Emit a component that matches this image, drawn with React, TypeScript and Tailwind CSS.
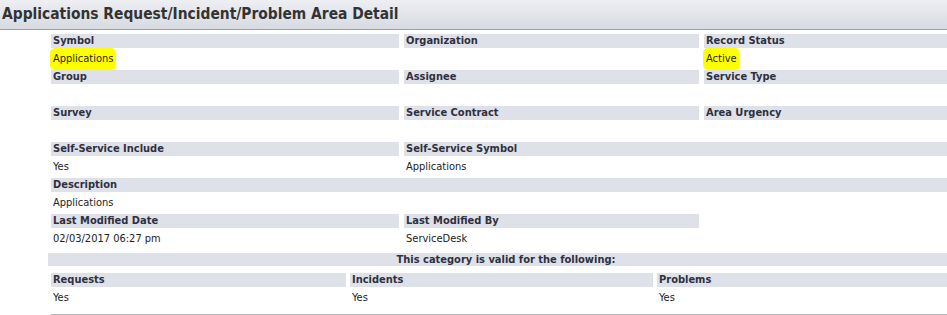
const font = "font-['DejaVu_Sans_Condensed','DejaVu_Sans',sans-serif]";

function Label({ children, className = "" }: { children?: React.ReactNode; className?: string }) {
  return (
    <div className={`h-[14px] bg-[#dfe1e8] pl-[2px] text-[11px] leading-[14px] font-bold text-[#2e3040] whitespace-nowrap ${className}`}>
      {children}
    </div>
  );
}

function Value({ children, className = "" }: { children?: React.ReactNode; className?: string }) {
  return (
    <div className={`h-[18px] pl-[2px] flex items-center text-[11px] text-[#222] whitespace-nowrap ${className}`}>
      {children}
    </div>
  );
}

function Marked({ children }: { children: React.ReactNode }) {
  return (
    <span className="bg-[#ffff00] -ml-[3px] px-[3px] py-[3px] rounded-[5px]">{children}</span>
  );
}

const grid3 = "grid grid-cols-[348px_295px_259px] gap-x-[5px]";

export default function App() {
  return (
    <div className={`w-[947px] h-[315px] overflow-hidden bg-white ${font}`}>
      <header className="h-[30px] border-b border-[#9a9ca6] bg-gradient-to-b from-[#eeeff3] to-[#d7dae1] flex items-center pl-[2px]">
        <h1 className="text-[15.4px] font-bold text-[#333] whitespace-nowrap">
          Applications Request/Incident/Problem Area Detail
        </h1>
      </header>

      <div className="ml-[51px] w-[913px] mt-[4px]">
        <div className={`${grid3} gap-y-[2px]`}>
          <Label>Symbol</Label>
          <Label>Organization</Label>
          <Label>Record Status</Label>
          <Value><Marked>Applications</Marked></Value>
          <Value />
          <Value><Marked>Active</Marked></Value>

          <Label>Group</Label>
          <Label>Assignee</Label>
          <Label>Service Type</Label>
          <Value />
          <Value />
          <Value />

          <Label>Survey</Label>
          <Label>Service Contract</Label>
          <Label>Area Urgency</Label>
          <Value />
          <Value />
          <Value />

          <Label>Self-Service Include</Label>
          <Label className="col-span-2">Self-Service Symbol</Label>
          <Value>Yes</Value>
          <Value className="col-span-2">Applications</Value>

          <Label className="col-span-3">Description</Label>
          <Value className="col-span-3">Applications</Value>

          <Label>Last Modified Date</Label>
          <Label>Last Modified By</Label>
          <div />
          <Value>02/03/2017 06:27 pm</Value>
          <Value>ServiceDesk</Value>
          <Value />
        </div>

        <div className="-ml-[3px] mt-[5px] h-[13px] bg-[#dfe1e8] text-center text-[11px] leading-[13px] font-bold text-[#2e3040]">
          This category is valid for the following:
        </div>

        <div className="grid grid-cols-[295px_303px_306px] gap-x-[4px] gap-y-[2px] mt-[7px]">
          <Label className="h-[13px] leading-[13px]">Requests</Label>
          <Label className="h-[13px] leading-[13px]">Incidents</Label>
          <Label className="h-[13px] leading-[13px]">Problems</Label>
          <Value>Yes</Value>
          <Value>Yes</Value>
          <Value>Yes</Value>
        </div>
        <div className="mt-[7px] border-t border-[#b4b6bc]" />
      </div>
    </div>
  );
}
